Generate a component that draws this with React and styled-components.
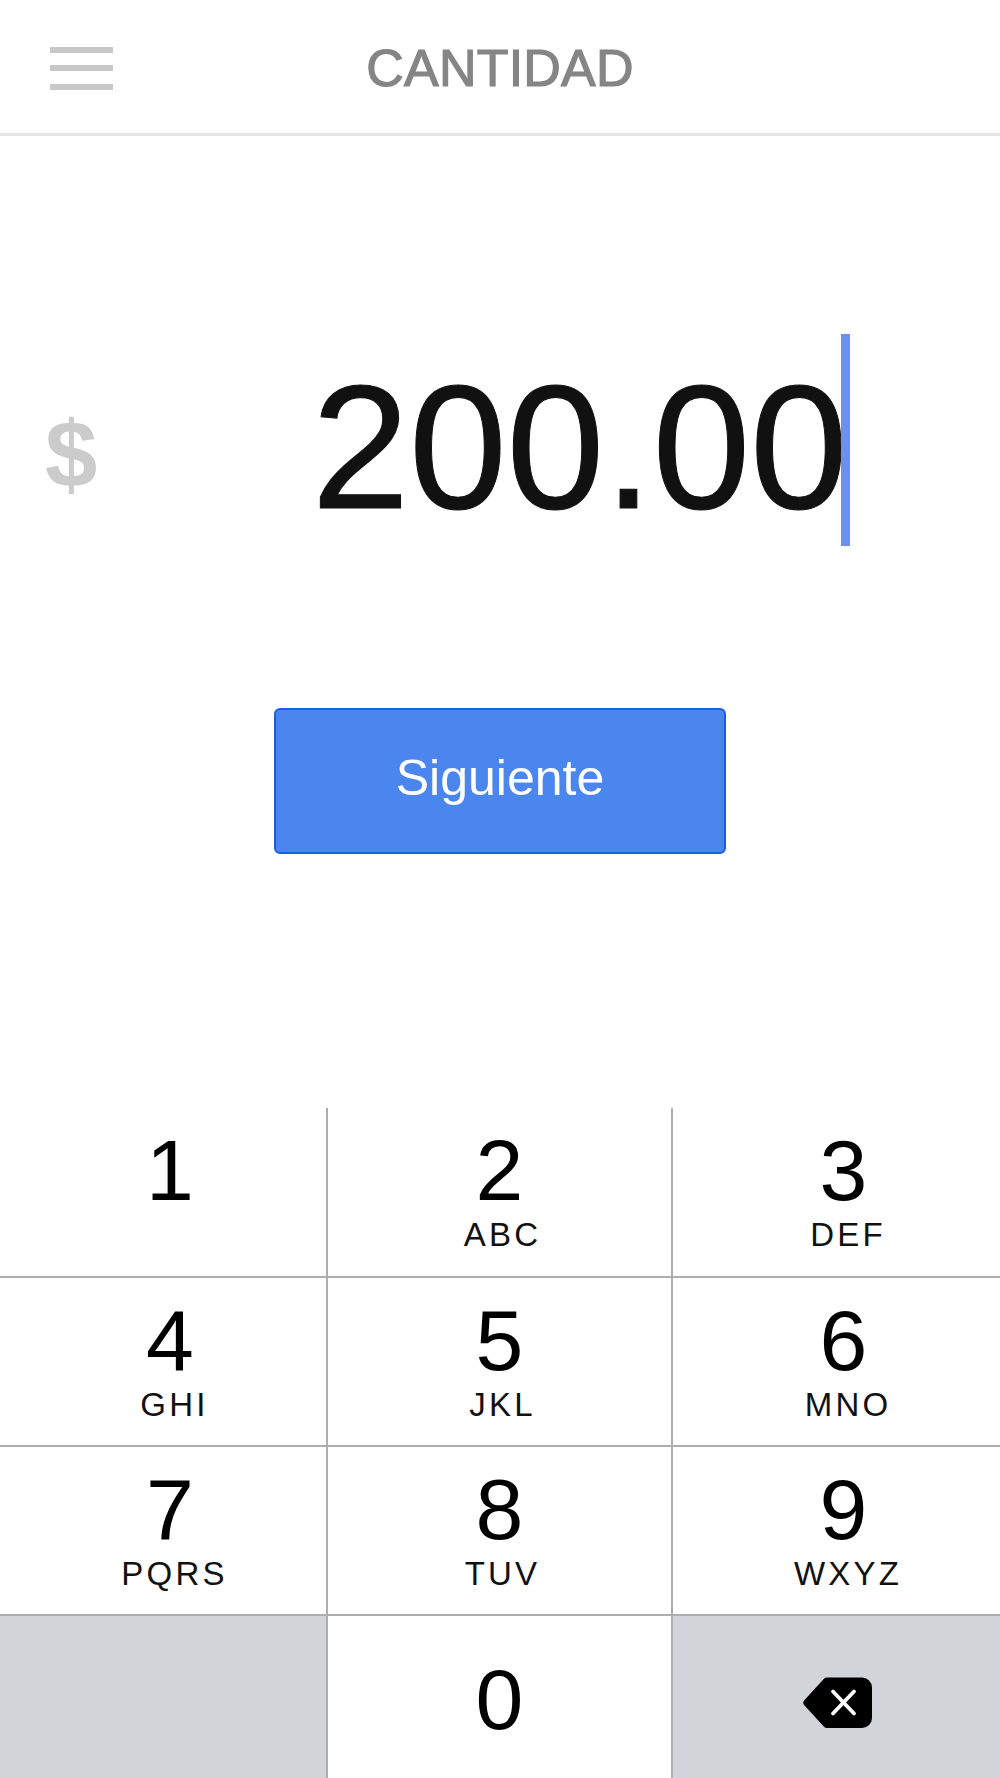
import React from 'react';
import styled, { createGlobalStyle } from 'styled-components';

const Global = createGlobalStyle`
  html, body { margin: 0; padding: 0; background: #fff; }
  body { font-family: "Liberation Sans", Arial, sans-serif; }
`;
const Page = styled.div`
  width: 1000px; height: 1778px; overflow: hidden; display: flex; flex-direction: column; background: #fff;
`;
const Header = styled.header`
  height: 133px; flex: none; box-sizing: content-box; border-bottom: 3px solid #e6e6e6;
  display: grid; grid-template-columns: 1fr auto 1fr; align-items: center; padding: 0 50px;
`;
const Burger = styled.div`
  width: 63px; display: flex; flex-direction: column; gap: 12.5px; margin-top: 3px;
  span { display: block; height: 6px; background: #c8c8c8; }
`;
const Title = styled.h1`
  margin: 2px 0 0; font-size: 52px; font-weight: 400; color: #858585; letter-spacing: 0.2px; -webkit-text-stroke: 1.2px #858585; line-height: 1;
`;
const AmountRow = styled.div`
  display: flex; align-items: center; height: 212px; margin-top: 198px; padding-left: 45px;
`;
const Currency = styled.span`
  font-size: 94px; font-weight: 700; color: #cbcbcb; line-height: 1; width: 266.6px; margin-top: 30px; flex: none;
`;
const Amount = styled.span`
  font-size: 176px; color: #111; line-height: 212px; letter-spacing: -0.4px; margin-top: 13px; -webkit-text-stroke: 1px #111;
`;
const Caret = styled.span`
  width: 9px; height: 212px; background: #6c8ff2; margin-left: -6.6px; flex: none;
`;
const Next = styled.button`
  display: block; box-sizing: border-box; width: 452px; height: 146px; margin: 162px auto 0;
  background: #4a86ee; border: 2px solid #1c5fdc; border-radius: 6px; color: #fff;
  font: 400 50px "Liberation Sans", Arial, sans-serif; padding: 0 0 6px;
`;
const Keypad = styled.div`
  margin-top: auto; height: 670px; display: grid;
  grid-template-columns: 328px 345px 327px; grid-template-rows: 170px 169px 169px 162px;
`;
const Key = styled.div`
  box-sizing: border-box; display: flex; flex-direction: column; align-items: center;
  padding-top: ${p => p.$top}px;
  padding-left: ${p => (p.$side ? 14 : 0)}px;
  background: ${p => (p.$dark ? '#d1d4d9' : '#fff')};
  border-right: ${p => (p.$last ? 'none' : '2px solid #aeaeae')};
  border-bottom: ${p => (p.$bottom ? 'none' : '2px solid #aeaeae')};
`;
const Digit = styled.span`
  font-size: 86px; line-height: 86px; color: #000;
`;
const Letters = styled.span`
  font-size: 33px; line-height: 36px; letter-spacing: 3.2px; color: #111; margin-top: 4.5px;
  padding-left: ${p => (p.$side ? 9 : 6)}px;
`;
const Eraser = styled.svg`
  width: 72px; height: 54px; display: block; margin-left: -12px;
`;

const rows = [
  ['1', ''], ['2', 'ABC'], ['3', 'DEF'],
  ['4', 'GHI'], ['5', 'JKL'], ['6', 'MNO'],
  ['7', 'PQRS'], ['8', 'TUV'], ['9', 'WXYZ'],
];

export default function App() {
  return (
    <Page>
      <Global />
      <Header>
        <Burger><span /><span /><span /></Burger>
        <Title>CANTIDAD</Title>
      </Header>
      <AmountRow>
        <Currency>$</Currency>
        <Amount>200.00</Amount>
        <Caret />
      </AmountRow>
      <Next>Siguiente</Next>
      <Keypad>
        {rows.map(([d, l], i) => (
          <Key key={d} $top={18.5} $side={i % 3 !== 1} $last={i % 3 === 2}>
            <Digit>{d}</Digit>
            {l && <Letters $side={i % 3 !== 1}>{l}</Letters>}
          </Key>
        ))}
        <Key $dark $bottom $top={0} />
        <Key $bottom $top={40}><Digit>0</Digit></Key>
        <Key $dark $bottom $last $top={60} $side>
          <Eraser viewBox="0 0 72 54">
            <path d="M25 1.5H60a10 10 0 0 1 10 10V42a10 10 0 0 1-10 10H25a4 4 0 0 1-3-1.3L2.5 29.5a4 4 0 0 1 0-5.5L22 2.8A4 4 0 0 1 25 1.5z" fill="#000" />
            <path d="M31 15.5l21 22M52 15.5l-21 22" stroke="#fff" strokeWidth="3.8" strokeLinecap="round" fill="none" />
          </Eraser>
        </Key>
      </Keypad>
    </Page>
  );
}
